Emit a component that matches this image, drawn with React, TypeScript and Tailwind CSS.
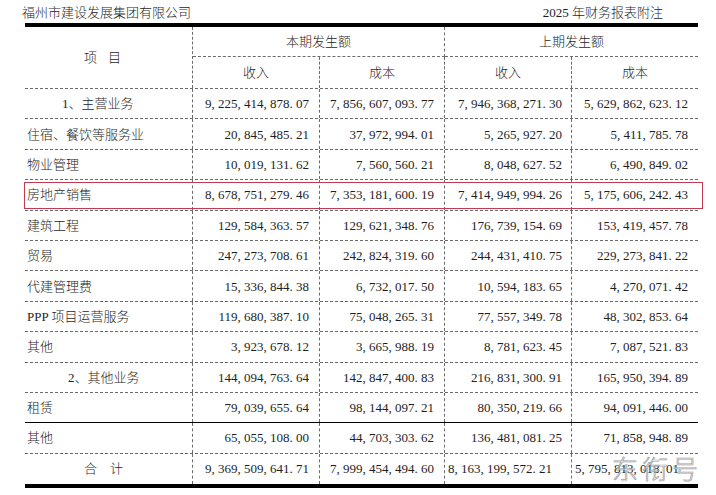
import React from 'react';

type Row = {
  label: string;
  indent?: string;
  values: string[];
  solidBottom?: boolean;
  highlight?: boolean;
};

const rows: Row[] = [
  { label: '1、主营业务', indent: 'pl-[37px]', values: ['9,225,414,878.07', '7,856,607,093.77', '7,946,368,271.30', '5,629,862,623.12'] },
  { label: '住宿、餐饮等服务业', values: ['20,845,485.21', '37,972,994.01', '5,265,927.20', '5,411,785.78'] },
  { label: '物业管理', values: ['10,019,131.62', '7,560,560.21', '8,048,627.52', '6,490,849.02'] },
  { label: '房地产销售', values: ['8,678,751,279.46', '7,353,181,600.19', '7,414,949,994.26', '5,175,606,242.43'], highlight: true },
  { label: '建筑工程', values: ['129,584,363.57', '129,621,348.76', '176,739,154.69', '153,419,457.78'] },
  { label: '贸易', values: ['247,273,708.61', '242,824,319.60', '244,431,410.75', '229,273,841.22'] },
  { label: '代建管理费', values: ['15,336,844.38', '6,732,017.50', '10,594,183.65', '4,270,071.42'] },
  { label: 'PPP 项目运营服务', values: ['119,680,387.10', '75,048,265.31', '77,557,349.78', '48,302,853.64'] },
  { label: '其他', values: ['3,923,678.12', '3,665,988.19', '8,781,623.45', '7,087,521.83'] },
  { label: '2、其他业务', indent: 'pl-[43px]', values: ['144,094,763.64', '142,847,400.83', '216,831,300.91', '165,950,394.89'] },
  { label: '租赁', values: ['79,039,655.64', '98,144,097.21', '80,350,219.66', '94,091,446.00'], solidBottom: true },
  { label: '其他', values: ['65,055,108.00', '44,703,303.62', '136,481,081.25', '71,858,948.89'] },
];

const cols = 'grid grid-cols-[168px_127px_125px_127px_126px]';
const dashR = 'border-r border-dashed border-[#6b6b6b]';
const dashB = 'border-b border-dashed border-[#6b6b6b]';

function Num({ v }: { v: string }) {
  return (
    <span className="whitespace-nowrap">
      {v.split('').map((c, i) =>
        c === ',' || c === '.' ? (
          <span key={i} className="inline-block w-[6.5px]">{c}</span>
        ) : (
          <span key={i}>{c}</span>
        )
      )}
    </span>
  );
}

function NumCell({ v, last, tight }: { v: string; last?: boolean; tight?: boolean }) {
  return (
    <div className={`flex items-center justify-end ${tight ? 'pr-[9px]' : 'pr-[10px]'} ${last ? '' : dashR}`}>
      <Num v={v} />
    </div>
  );
}

export default function App() {
  return (
    <div
      className="relative w-[716px] h-[495px] overflow-hidden bg-white text-[13px] font-light leading-none text-[#1e1e1e]"
      style={{ fontFamily: '"Liberation Serif", "Noto Sans CJK SC", serif' }}
    >
      {/* page header */}
      <div className="flex h-[23px] items-center justify-between pl-[22px] pr-[53px] pt-[2px]">
        <span>福州市建设发展集团有限公司</span>
        <span>2025 年财务报表附注</span>
      </div>

      <div className="ml-[25px] w-[673px] border-t-4 border-b-4 border-black">
        {/* column heads */}
        <div className={`${cols} grid-rows-[30px_31px] ${dashB}`}>
          <div className={`row-span-2 flex items-center justify-center gap-[11px] pr-[12px] ${dashR}`}>
            <span>项</span>
            <span>目</span>
          </div>
          <div className={`col-span-2 flex items-center justify-center ${dashR} ${dashB}`}>本期发生额</div>
          <div className={`col-span-2 flex items-center justify-center ${dashB}`}>上期发生额</div>
          <div className={`flex items-center justify-center ${dashR}`}>收入</div>
          <div className={`flex items-center justify-center ${dashR}`}>成本</div>
          <div className={`flex items-center justify-center ${dashR}`}>收入</div>
          <div className="flex items-center justify-center">成本</div>
        </div>

        {rows.map((r, i) => (
          <div
            key={i}
            className={`relative ${cols} h-[30.4px] ${
              r.solidBottom ? 'border-b border-black' : dashB
            }`}
          >
            <div className={`flex items-center ${r.indent ?? 'pl-[2px]'} ${dashR}`}>{r.label}</div>
            <NumCell v={r.values[0]} />
            <NumCell v={r.values[1]} />
            <NumCell v={r.values[2]} tight />
            <NumCell v={r.values[3]} last />
            {r.highlight && (
              <div className="pointer-events-none absolute left-[-1px] right-[-5px] top-[2px] bottom-[1px] border-[1.5px] border-[#c23a52]" />
            )}
          </div>
        ))}

        {/* total */}
        <div className={`${cols} h-[30.4px]`}>
          <div className={`flex items-center justify-center gap-[13px] pr-[10px] ${dashR}`}>
            <span>合</span>
            <span>计</span>
          </div>
          <NumCell v="9,369,509,641.71" />
          <NumCell v="7,999,454,494.60" />
          <div className={`flex items-center pl-[3px] ${dashR}`}>
            <Num v="8,163,199,572.21" />
          </div>
          <div className="flex items-center pl-[3px]">
            <Num v="5,795,813,018.01" />
          </div>
        </div>
      </div>

      {/* watermark */}
      <div
        className="pointer-events-none absolute left-[612px] top-[455px] text-[26px] font-light leading-none tracking-[4px] text-white/60 [-webkit-text-stroke:0.7px_#9c9c9c]"
        style={{ fontFamily: '"Noto Sans CJK SC", sans-serif' }}
      >
        东衔号
      </div>
    </div>
  );
}
